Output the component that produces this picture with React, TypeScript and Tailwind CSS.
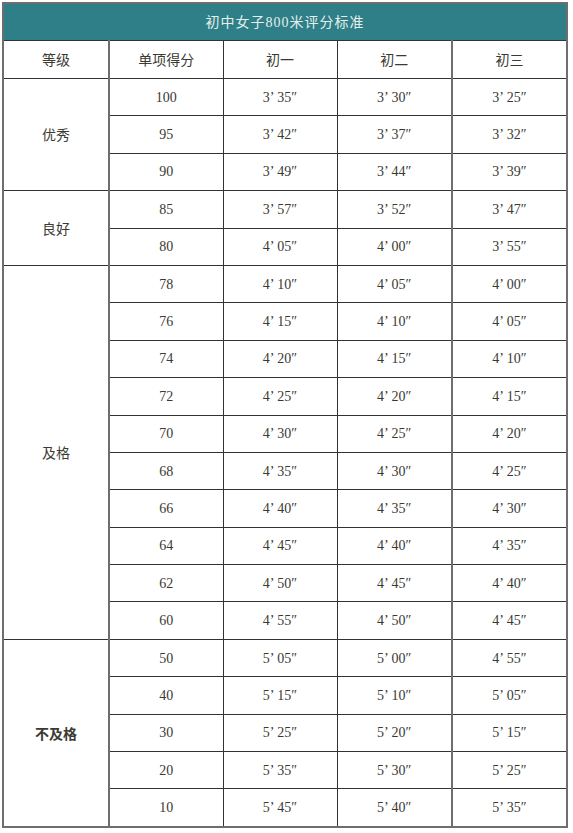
import React from "react";

const groups = [
  {
    level: "优秀",
    rows: [
      ["100", "3’35″", "3’30″", "3’25″"],
      ["95", "3’42″", "3’37″", "3’32″"],
      ["90", "3’49″", "3’44″", "3’39″"],
    ],
  },
  {
    level: "良好",
    rows: [
      ["85", "3’57″", "3’52″", "3’47″"],
      ["80", "4’05″", "4’00″", "3’55″"],
    ],
  },
  {
    level: "及格",
    rows: [
      ["78", "4’10″", "4’05″", "4’00″"],
      ["76", "4’15″", "4’10″", "4’05″"],
      ["74", "4’20″", "4’15″", "4’10″"],
      ["72", "4’25″", "4’20″", "4’15″"],
      ["70", "4’30″", "4’25″", "4’20″"],
      ["68", "4’35″", "4’30″", "4’25″"],
      ["66", "4’40″", "4’35″", "4’30″"],
      ["64", "4’45″", "4’40″", "4’35″"],
      ["62", "4’50″", "4’45″", "4’40″"],
      ["60", "4’55″", "4’50″", "4’45″"],
    ],
  },
  {
    level: "不及格",
    bold: true,
    rows: [
      ["50", "5’05″", "5’00″", "4’55″"],
      ["40", "5’15″", "5’10″", "5’05″"],
      ["30", "5’25″", "5’20″", "5’15″"],
      ["20", "5’35″", "5’30″", "5’25″"],
      ["10", "5’45″", "5’40″", "5’35″"],
    ],
  },
];

const cjk = "font-['Noto_Sans_CJK_SC',sans-serif]";
const num = "font-['Liberation_Serif','Noto_Sans_CJK_SC',serif]";

// a small gap after the minute mark, as in the source image
const t = (s: string) => s.replace("’", "’\u2009");

export default function App() {
  return (
    <div className="bg-white w-[573px] h-[833px] pt-[2px] pl-[2px]">
      <div className="w-[566px] border-2 border-[#6e6e6e]">
        <div
          className={`h-[36px] bg-[#2f7f88] flex items-center justify-center text-[14px] tracking-[1px] text-[#e4efec] ${num}`}
        >
          初中女子800米评分标准
        </div>
        <table className="w-full border-collapse table-fixed text-center text-[#3a3a33]">
          <colgroup>
            <col className="w-[105px]" />
            <col className="w-[114px]" />
            <col className="w-[114px]" />
            <col className="w-[115px]" />
            <col />
          </colgroup>
          <thead>
            <tr className={`h-[38px] text-[14px] ${cjk}`}>
              <th className="font-normal border-t border-[#333] border-r-2 border-r-[#6e6e6e]">等级</th>
              <th className="font-normal border-t border-r border-[#333]">单项得分</th>
              <th className="font-normal border-t border-r border-[#333]">初一</th>
              <th className="font-normal border-t border-r-2 border-[#333] border-r-[#6e6e6e]">初二</th>
              <th className="font-normal border-t border-[#333]">初三</th>
            </tr>
          </thead>
          <tbody>
            {groups.map((g) =>
              g.rows.map((r, i) => (
                <tr key={g.level + r[0]} className={`h-[37.4px] text-[14px] ${num}`}>
                  {i === 0 && (
                    <td
                      rowSpan={g.rows.length}
                      className={`border-t border-[#333] border-r-2 border-r-[#6e6e6e] text-[14px] ${cjk} ${
                        g.bold ? "font-bold" : ""
                      }`}
                    >
                      {g.level}
                    </td>
                  )}
                  <td className="border-t border-r border-[#333]">{r[0]}</td>
                  <td className="border-t border-r border-[#333]">{t(r[1])}</td>
                  <td className="border-t border-r-2 border-[#333] border-r-[#6e6e6e]">{t(r[2])}</td>
                  <td className="border-t border-[#333]">{t(r[3])}</td>
                </tr>
              ))
            )}
          </tbody>
        </table>
      </div>
    </div>
  );
}
